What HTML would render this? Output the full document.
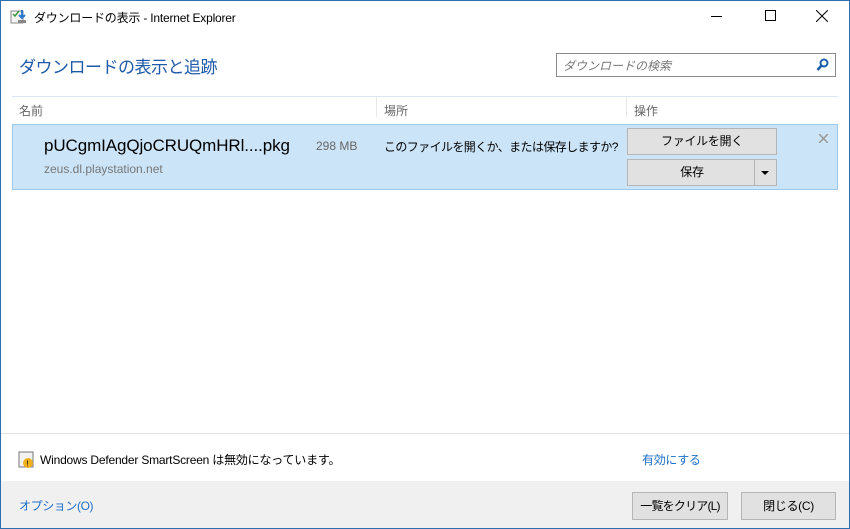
<!DOCTYPE html>
<html><head><meta charset="utf-8"><style>
*{margin:0;padding:0;box-sizing:border-box}
body{width:850px;height:529px;overflow:hidden;background:#fff;font-family:"Liberation Sans","Noto Sans CJK JP",sans-serif;position:relative;color:#000}
.a{position:absolute;white-space:nowrap}
.win{position:absolute;left:0;top:0;width:850px;height:529px;border:1px solid #2b6fb0}
.btn{position:absolute;background:#e1e1e1;border:1px solid #b5b5b5;font-size:12px;text-align:center;letter-spacing:-0.3px}
</style></head><body>
<div class="win"></div>
<svg class="a" style="left:10px;top:8px" width="18" height="18" viewBox="0 0 18 18"><rect x="1" y="3" width="12" height="12" fill="#f4f4f4" stroke="#8a8a8a"/><path d="M3 6l2 2 4-5" stroke="#3a9a3a" stroke-width="1.5" fill="none"/><path d="M12 2v8m-3-3l3 3 3-3" stroke="#2a7ad0" stroke-width="2" fill="none"/><rect x="8" y="12" width="8" height="3" fill="#888"/></svg>
<div class="a" style="left:34px;top:9px;font-size:12px;color:#000;letter-spacing:-0.2px">ダウンロードの表示 - Internet Explorer</div>
<div class="a" style="left:711px;top:16px;width:11px;height:1px;background:#000"></div>
<div class="a" style="left:765px;top:10px;width:11px;height:11px;border:1px solid #000"></div>
<svg class="a" style="left:816px;top:10px" width="12" height="12"><path d="M0 0L12 12M12 0L0 12" stroke="#000" stroke-width="1"/></svg>
<div class="a" style="left:19px;top:53px;font-size:17px;color:#1e5aa8;letter-spacing:-0.5px">ダウンロードの表示と追跡</div>
<div class="a" style="left:556px;top:53px;width:280px;height:24px;border:1px solid #8a8a8a"></div>
<div class="a" style="left:563px;top:57px;font-size:12px;color:#777;font-style:italic">ダウンロードの検索</div>
<svg class="a" style="left:816px;top:58px" width="14" height="14"><circle cx="8" cy="5" r="3.5" stroke="#1d5ea8" stroke-width="2" fill="none"/><path d="M5.5 7.5L1.5 12" stroke="#1d5ea8" stroke-width="2.5"/></svg>
<div class="a" style="left:12px;top:96px;width:826px;height:1px;background:#dce6f0"></div>
<div class="a" style="left:376px;top:97px;width:1px;height:20px;background:#e8e8e8"></div>
<div class="a" style="left:626px;top:97px;width:1px;height:20px;background:#e8e8e8"></div>
<div class="a" style="left:19px;top:102px;font-size:12px;color:#666">名前</div>
<div class="a" style="left:384px;top:102px;font-size:12px;color:#666">場所</div>
<div class="a" style="left:634px;top:102px;font-size:12px;color:#666">操作</div>
<div class="a" style="left:12px;top:124px;width:826px;height:66px;background:#cce4f7;border:1px solid #99c9ef"></div>
<div class="a" style="left:44px;top:136px;font-size:17px;color:#000;letter-spacing:-0.1px">pUCgmIAgQjoCRUQmHRl....pkg</div>
<div class="a" style="left:316px;top:139px;font-size:12px;color:#666">298 MB</div>
<div class="a" style="left:44px;top:162px;font-size:12px;color:#777">zeus.dl.playstation.net</div>
<div class="a" style="left:384px;top:138px;font-size:12px;color:#000;letter-spacing:-0.6px">このファイルを開くか、または保存しますか?</div>
<div class="btn" style="left:627px;top:128px;width:150px;height:27px;line-height:25px">ファイルを開く</div>
<div class="btn" style="left:627px;top:159px;width:150px;height:27px;line-height:25px"><span style="position:absolute;left:0;width:128px">保存</span><span style="position:absolute;left:126px;top:0;width:1px;height:25px;background:#b5b5b5"></span><span style="position:absolute;left:133px;top:11px;border:4px solid transparent;border-top:4px solid #000"></span></div>
<svg class="a" style="left:819px;top:134px" width="9" height="9"><path d="M0 0L9 9M9 0L0 9" stroke="#999" stroke-width="1.5"/></svg>
<div class="a" style="left:1px;top:433px;width:848px;height:1px;background:#e0e0e0"></div>
<svg class="a" style="left:18px;top:451px" width="18" height="18"><rect x="1" y="1" width="14" height="15" fill="#f2f2f2" stroke="#777"/><circle cx="10" cy="12" r="5" fill="#f0b020"/><text x="8.5" y="15.5" font-size="8" font-family="Liberation Sans">!</text></svg>
<div class="a" style="left:40px;top:451px;font-size:12px;color:#000;letter-spacing:-0.2px">Windows Defender SmartScreen は無効になっています。</div>
<div class="a" style="left:642px;top:451px;font-size:12px;color:#1e6fc8;letter-spacing:-0.3px">有効にする</div>
<div class="a" style="left:1px;top:481px;width:848px;height:47px;background:#f0f0f0"></div>
<div class="a" style="left:19px;top:497px;font-size:12px;color:#1e6fc8;letter-spacing:-0.4px">オプション(O)</div>
<div class="btn" style="left:632px;top:492px;width:96px;height:28px;line-height:26px;letter-spacing:-0.8px">一覧をクリア(L)</div>
<div class="btn" style="left:741px;top:492px;width:95px;height:28px;line-height:26px">閉じる(C)</div>
</body></html>
